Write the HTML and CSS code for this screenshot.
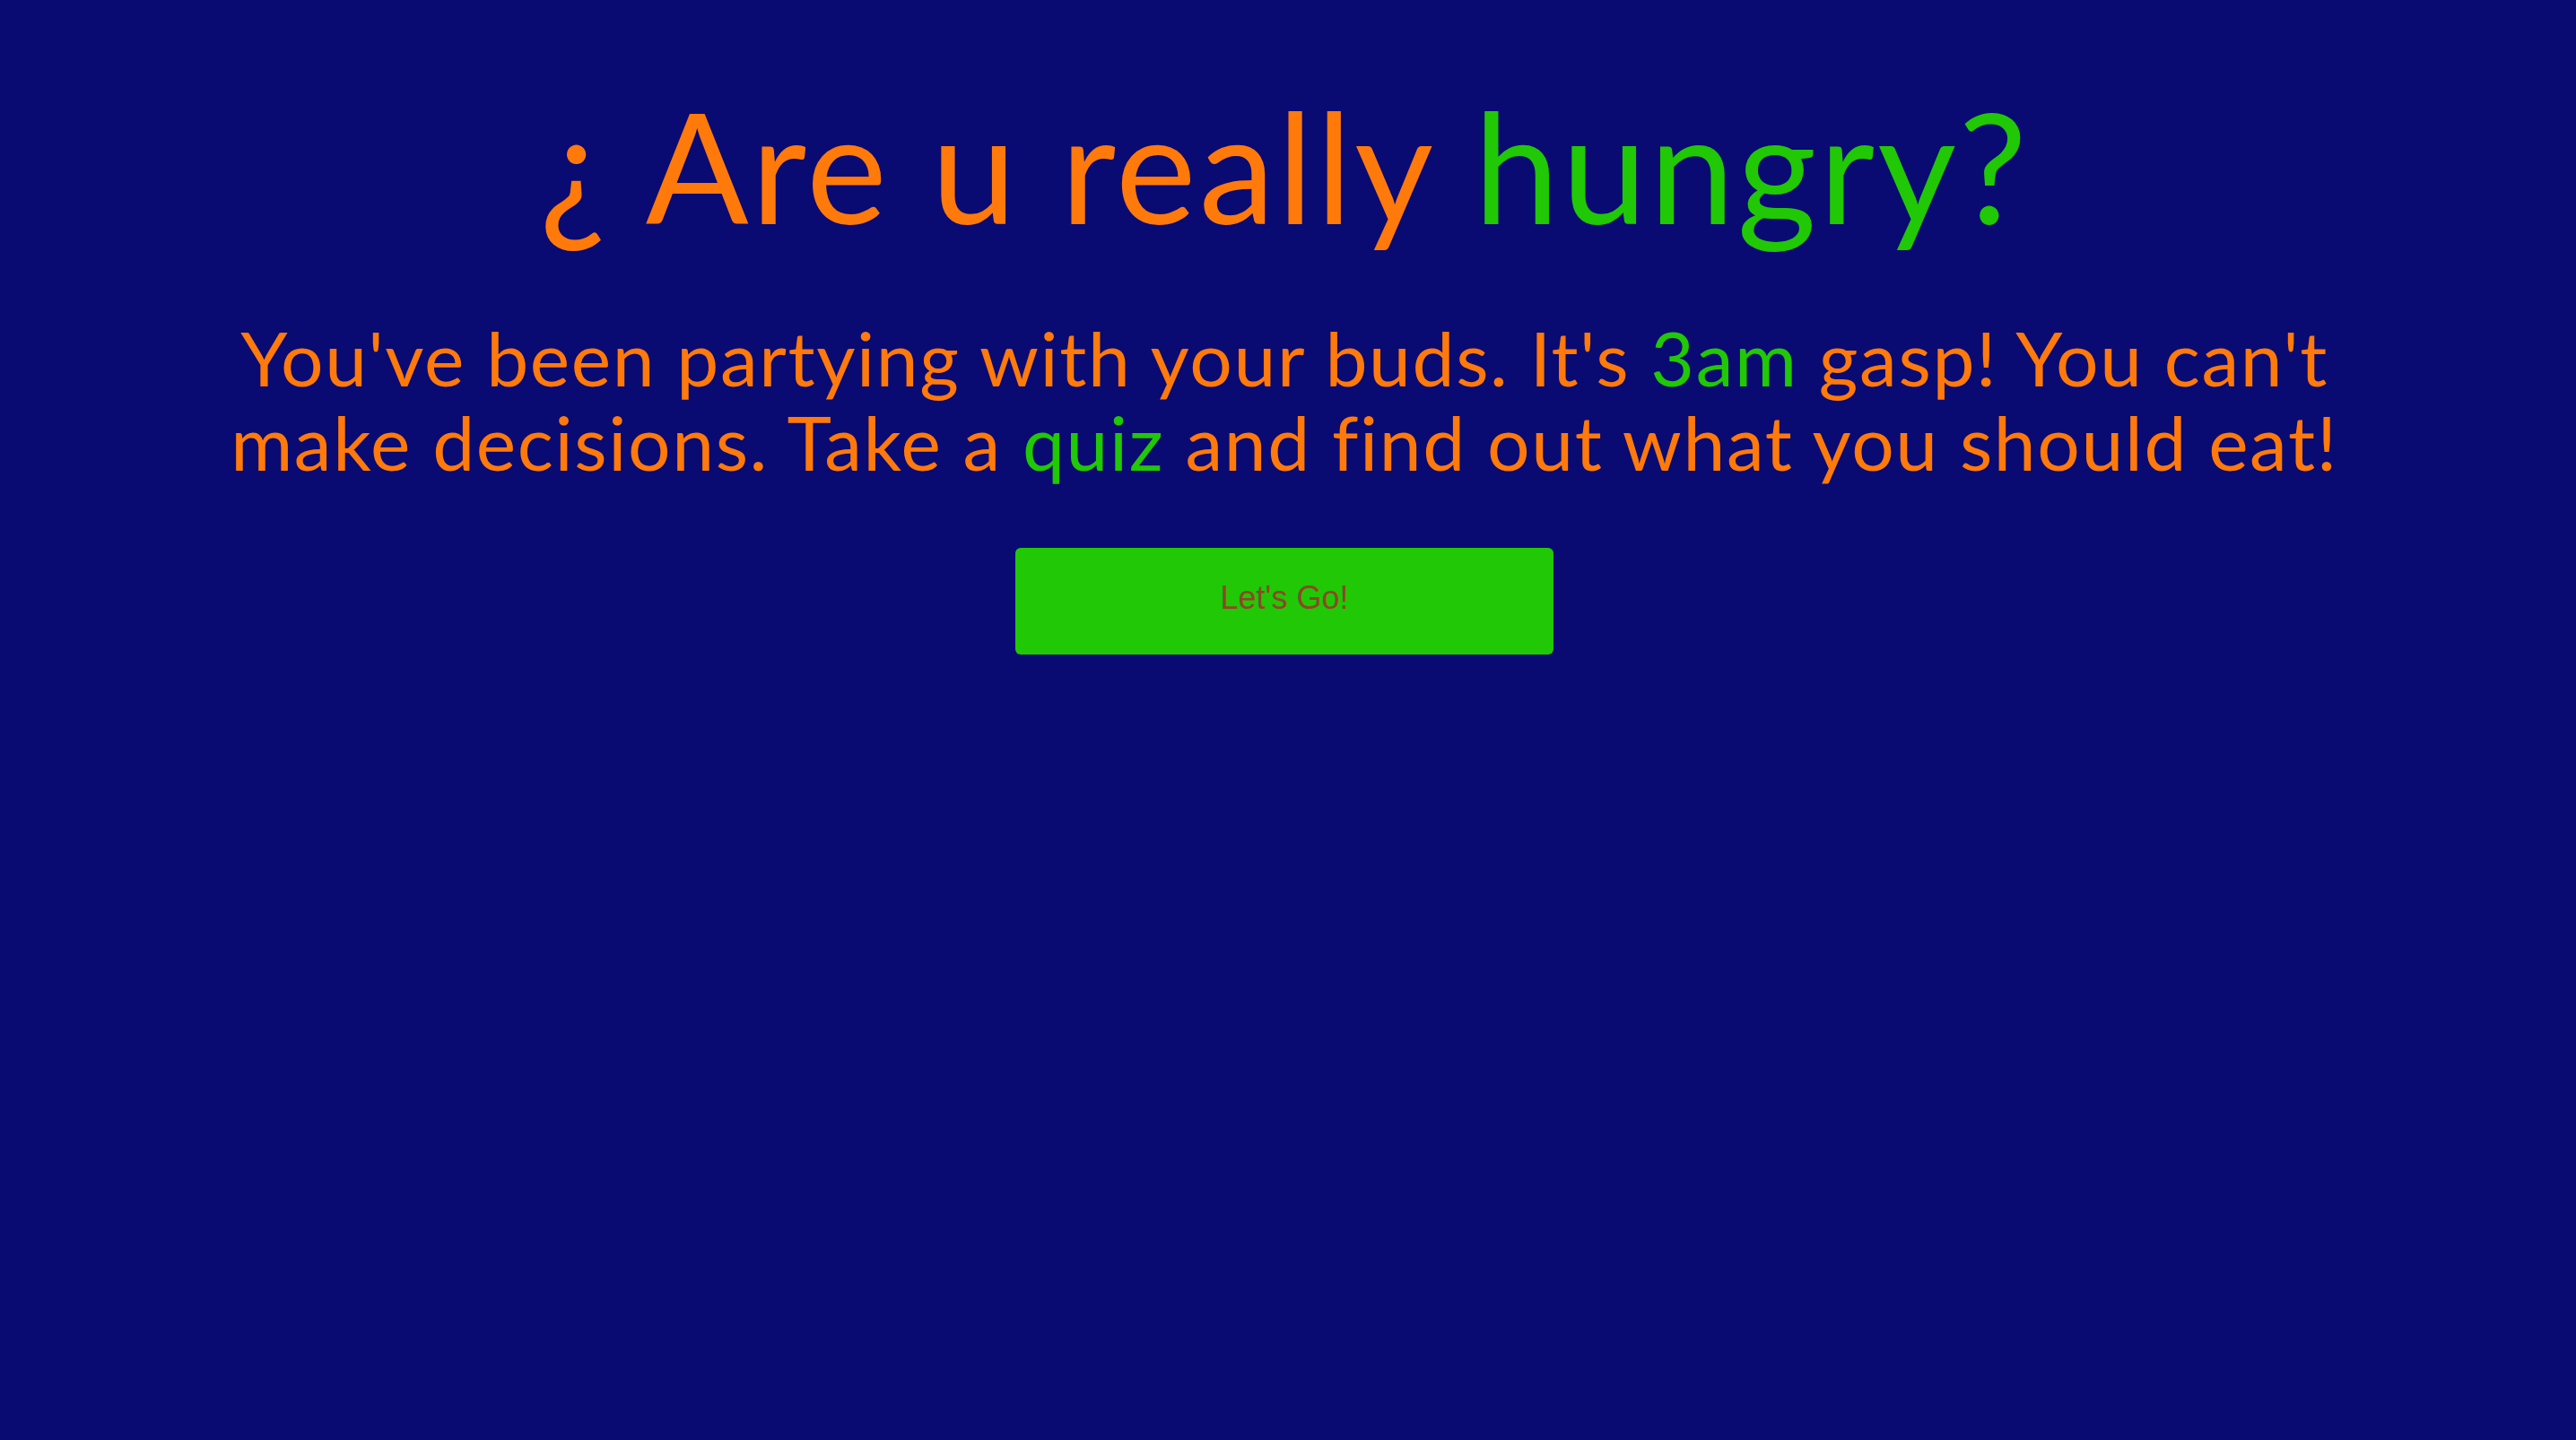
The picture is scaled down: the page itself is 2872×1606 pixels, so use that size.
FILE: index.html
```html
<!DOCTYPE html>
<html lang="en">
<head>
<meta charset="utf-8">
<title>Are u really hungry?</title>
<link rel="stylesheet" href="styles.css">
</head>
<body>
<main class="intro">
  <h1 class="title">¿ Are u really <span class="accent">hungry?</span></h1>
  <p class="lede">You've been partying with your buds. It's <span class="accent">3am</span> gasp! You can't make decisions. Take a <span class="accent">quiz</span> and find out what you should eat!</p>
  <button class="go" type="button">Let's Go!</button>
</main>
</body>
</html>
```

FILE: styles.css
```css
html, body {
  margin: 0;
  padding: 0;
  background: #0a0a73;
  height: 100%;
}
.intro {
  display: flex;
  flex-direction: column;
  align-items: center;
  text-align: center;
  padding: 82px 8px 0 0;
  font-family: "Lato", "Open Sans", sans-serif;
  color: #ff7a0b;
}
.title {
  margin: 0;
  font-size: 170px;
  font-weight: 400;
  line-height: 1.2;
  letter-spacing: 3px;
}
.accent {
  color: #20c805;
}
.lede {
  margin: 66px 0 0;
  max-width: 2420px;
  font-size: 84px;
  line-height: 94px;
  letter-spacing: 1.6px;
}
.go {
  margin-top: 71px;
  width: 600px;
  height: 119px;
  padding: 0 0 8px;
  border: none;
  border-radius: 6px;
  background: #20c805;
  color: #8e4726;
  font-family: "Liberation Sans", Arial, sans-serif;
  font-size: 36px;
  cursor: pointer;
}
```
